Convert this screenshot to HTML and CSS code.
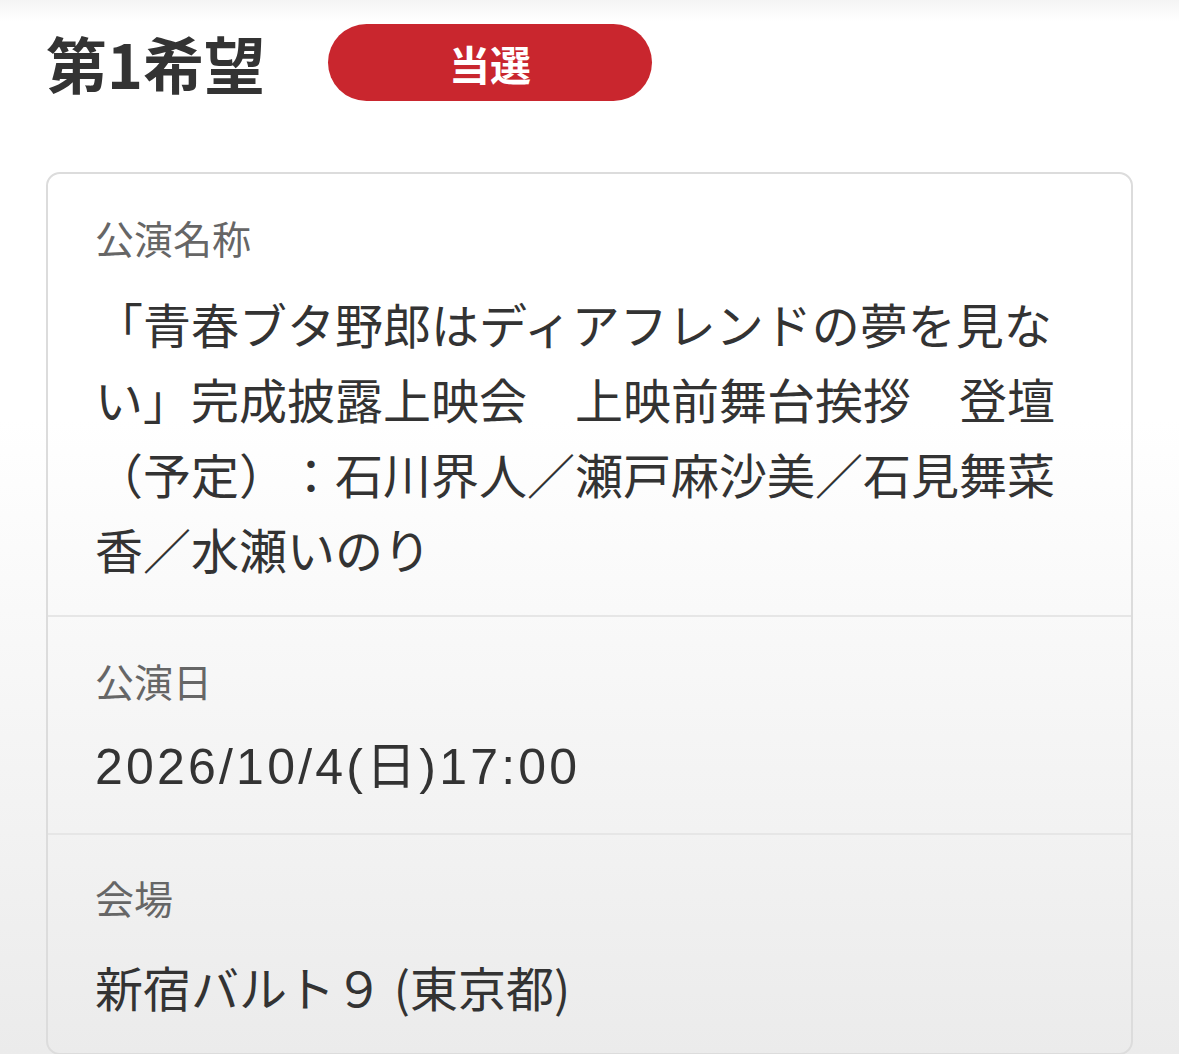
FILE: index.html
```html
<!DOCTYPE html>
<html lang="ja">
<head>
<meta charset="utf-8">
<link rel="stylesheet" href="styles.css">
</head>
<body>
<div class="page">
  <div class="header">
    <h1 class="title">第1希望</h1>
    <span class="pill">当選</span>
  </div>
  <div class="card">
    <div class="section">
      <div class="label">公演名称</div>
      <div class="value">「青春ブタ野郎はディアフレンドの夢を見ない」完成披露上映会　上映前舞台挨拶　登壇（予定）：石川界人／瀬戸麻沙美／石見舞菜香／水瀬いのり</div>
    </div>
    <div class="section">
      <div class="label">公演日</div>
      <div class="value date">2026/10/4(日)17:00</div>
    </div>
    <div class="section last">
      <div class="label">会場</div>
      <div class="value">新宿バルト９ (東京都)</div>
    </div>
  </div>
</div>
</body>
</html>
```

FILE: styles.css
```css
html, body {
  margin: 0;
  padding: 0;
}
body {
  width: 1179px;
  height: 1054px;
  overflow: hidden;
  font-family: "Noto Sans CJK JP", "Noto Sans", sans-serif;
  background: linear-gradient(to bottom, #f4f4f4 0px, #ffffff 22px, #ffffff 420px, #ebebeb 1054px);
  color: #333;
}
.page {
  padding: 24px 46px 0 46px;
}
.header {
  display: flex;
  align-items: center;
  height: 77px;
  margin-bottom: 71px;
}
.title {
  margin: 0;
  font-size: 61px;
  font-weight: 700;
  color: #333;
  line-height: 1;
  width: 282px;
}
.pill {
  display: flex;
  align-items: center;
  justify-content: center;
  width: 324px;
  height: 77px;
  border-radius: 39px;
  background: #c9262e;
  color: #fff;
  font-size: 41px;
  font-weight: 700;
}
.card {
  border: 2.5px solid #dcdcdc;
  border-radius: 14px;
  width: 1087px;
  box-sizing: border-box;
  height: 883px;
}
.section {
  padding: 38px 60px 29px 47px;
  border-bottom: 2px solid #e6e6e6;
}
.section.last {
  border-bottom: none;
  padding-top: 37px;
}
.label {
  font-size: 39px;
  line-height: 50px;
  color: #666;
  margin-bottom: 24px;
}
.section.last .label {
  margin-bottom: 27px;
}
.value {
  font-size: 48px;
  line-height: 75px;
  color: #333;
  text-spacing-trim: space-all;
}
.date {
  font-family: "Liberation Sans", "Noto Sans CJK JP", sans-serif;
  font-size: 50px;
  letter-spacing: 3.2px;
  padding-top: 2px;
  line-height: 73px;
}
```
